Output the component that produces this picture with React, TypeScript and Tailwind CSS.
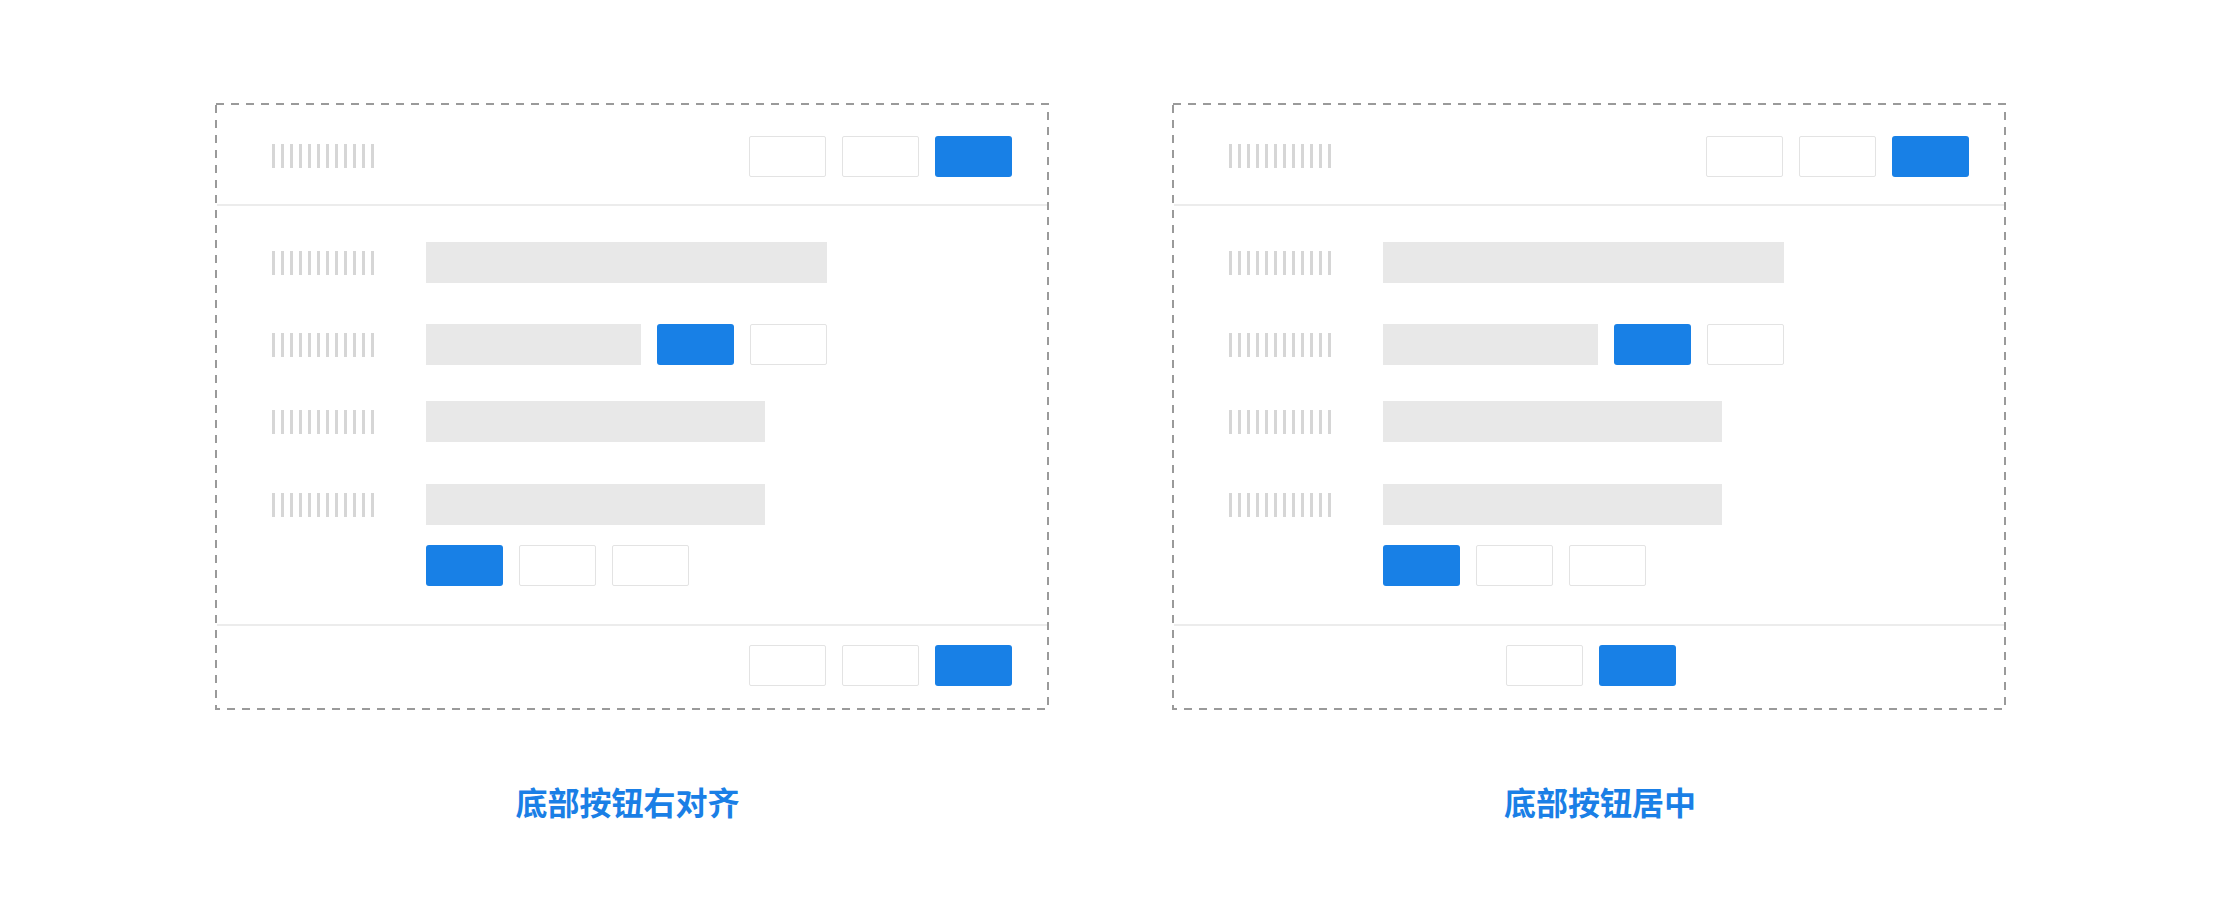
import React from "react";

const BLUE = "bg-[#1880e6]";

function LabelBars() {
  return (
    <div className="flex h-[24px] w-[102px] gap-[6px]">
      {Array.from({ length: 12 }).map((_, i) => (
        <div key={i} className="h-full w-[3px] bg-[#d6d6d6]" />
      ))}
    </div>
  );
}

function PrimaryBtn() {
  return <div className={`h-[41px] w-[77px] rounded-[3px] ${BLUE}`} />;
}

function GhostBtn() {
  return (
    <div className="h-[41px] w-[77px] rounded-[2px] border border-[#e3e3e3] bg-white" />
  );
}

function Input({ w }: { w: string }) {
  return <div className={`h-[41px] bg-[#e8e8e8] ${w}`} />;
}

function Row({ children, className = "" }: { children: React.ReactNode; className?: string }) {
  return (
    <div className={`flex h-[41px] items-center ${className}`}>
      <div className="w-[154px]">
        <LabelBars />
      </div>
      {children}
    </div>
  );
}

// dashed outline drawn over the panel edge
function DashedFrame() {
  return (
    <svg
      className="pointer-events-none absolute -inset-[2px]"
      width={834}
      height={607}
      viewBox="0 0 834 607"
    >
      <rect
        x={1}
        y={1}
        width={832}
        height={605}
        fill="none"
        stroke="#9a9a9a"
        strokeWidth={2}
        strokeDasharray="8 7"
      />
    </svg>
  );
}

function Panel({ centered }: { centered: boolean }) {
  return (
    <div className="relative flex h-[607px] w-[834px] flex-col border-2 border-transparent bg-white">
      {/* header */}
      <div className="flex h-[101px] items-center justify-between border-b-2 border-[#ececec] pl-[55px] pr-[35px] pt-[3px]">
        <LabelBars />
        <div className="flex gap-[16px]">
          <GhostBtn />
          <GhostBtn />
          <PrimaryBtn />
        </div>
      </div>

      {/* body */}
      <div className="flex h-[418px] flex-col pl-[55px] pt-[36px]">
        <Row>
          <Input w="w-[401px]" />
        </Row>
        <Row className="mt-[41px]">
          <Input w="w-[215px]" />
          <div className="ml-[16px] flex gap-[16px]">
            <PrimaryBtn />
            <GhostBtn />
          </div>
        </Row>
        <Row className="mt-[36px]">
          <Input w="w-[339px]" />
        </Row>
        <Row className="mt-[42px]">
          <Input w="w-[339px]" />
        </Row>
        <div className="mt-[20px] flex gap-[16px] pl-[154px]">
          <PrimaryBtn />
          <GhostBtn />
          <GhostBtn />
        </div>
      </div>

      {/* footer */}
      <div
        className={`flex flex-1 border-t-2 border-[#ececec] pt-[19px] ${
          centered ? "justify-center pl-[3px]" : "justify-end pr-[35px]"
        }`}
      >
        <div className="flex gap-[16px]">
          <GhostBtn />
          {!centered && <GhostBtn />}
          <PrimaryBtn />
        </div>
      </div>

      <DashedFrame />
    </div>
  );
}

function Caption({ text, className }: { text: string; className: string }) {
  return (
    <div
      className={`mt-[75px] text-center text-[32px] font-bold leading-[32px] text-[#1a7fe6] ${className}`}
      style={{ fontFamily: '"Noto Sans CJK SC", "Noto Sans", sans-serif' }}
    >
      {text}
    </div>
  );
}

export default function App() {
  return (
    <div className="h-[922px] w-[2214px] overflow-hidden bg-white">
      <div className="flex gap-[123px] pl-[215px] pt-[103px]">
        <div className="flex w-[834px] flex-col">
          <Panel centered={false} />
          <Caption text="底部按钮右对齐" className="pr-[9px]" />
        </div>
        <div className="flex w-[835px] flex-col">
          <Panel centered />
          <Caption text="底部按钮居中" className="pl-[21px]" />
        </div>
      </div>
    </div>
  );
}
